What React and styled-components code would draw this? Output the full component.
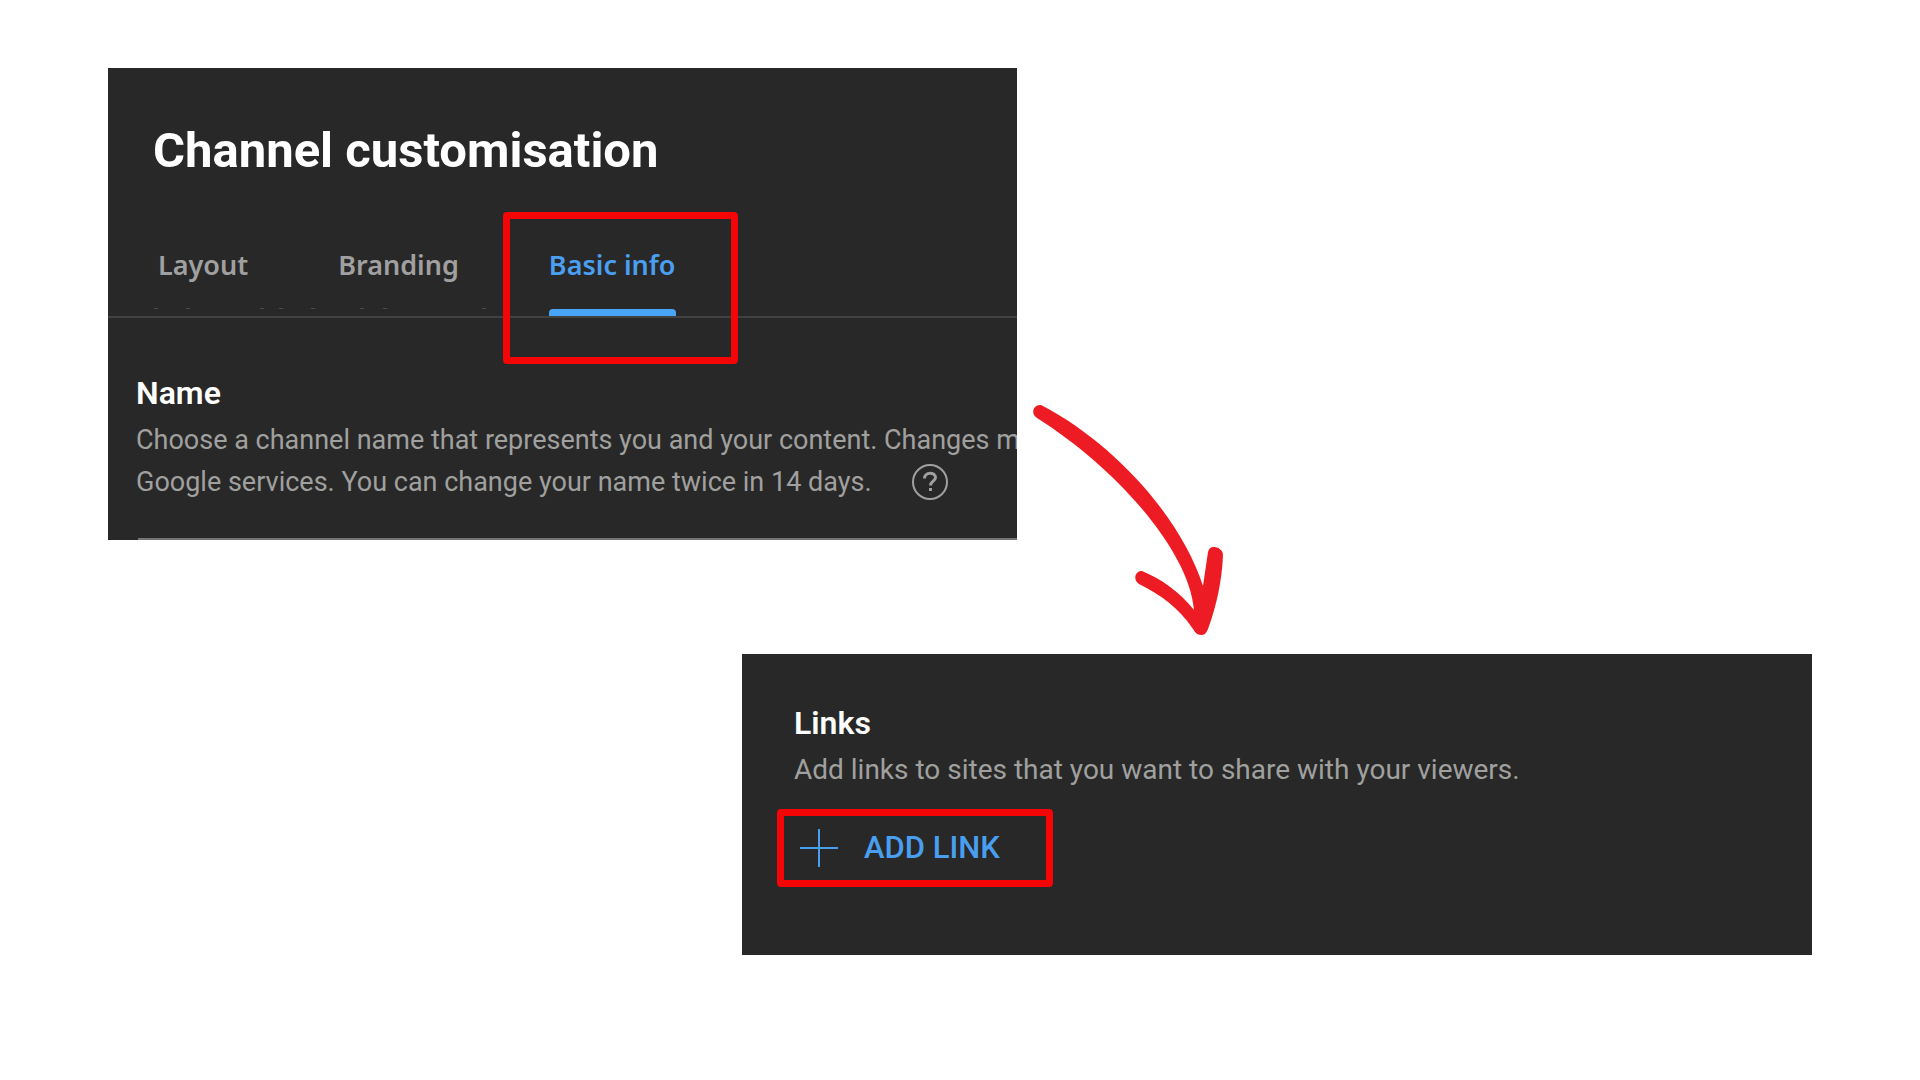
import React from "react";
import styled, { createGlobalStyle } from "styled-components";

const GlobalStyle = createGlobalStyle`
  *, *::before, *::after { box-sizing: border-box; }
  body { margin: 0; background: #fff; font-family: Roboto, "Liberation Sans", sans-serif; }
`;

const Page = styled.main`
  display: flex;
  flex-direction: column;
  gap: 14px;
  padding: 68px 108px;
`;

const TopRow = styled.div`
  display: flex;
  align-items: flex-start;
`;

const Panel = styled.section`
  width: 100%;
  max-width: ${(p) => p.$max};
  background: #282828;
  overflow: hidden;
`;

const CustomisationPanel = styled(Panel)`
  min-width: 0;
`;

const LinksPanel = styled(Panel)`
  margin-left: auto;
  padding: 48px 35px 68px;
`;

const Title = styled.h1`
  margin: 0;
  padding: 53px 45px 0;
  font: 700 49px/60px Roboto, "Liberation Sans", sans-serif;
  color: #fff;
`;

const Tabs = styled.nav`
  position: relative;
  display: flex;
  gap: 90px;
  height: 137px;
  padding: 64px 50px 0;
  border-bottom: 2px solid #414141;
`;

const Tab = styled.button`
  position: relative;
  padding: 0 0 31px;
  border: 0;
  background: none;
  font: 600 27px/40px "Noto Sans", "Open Sans", sans-serif;
  white-space: nowrap;
  color: ${(p) => (p.$active ? "#4a9ff0" : "#a0a0a0")};

  &::after {
    content: "";
    display: ${(p) => (p.$active ? "block" : "none")};
    position: absolute;
    inset: auto 0 0;
    height: 7px;
    border-radius: 4px 4px 0 0;
    background: #48a4f6;
  }
`;

const Highlight = styled.span`
  position: absolute;
  inset: -33px -62px -48px -46px;
  z-index: 1;
  border: 7px solid #f50505;
  border-radius: 4px;
  pointer-events: none;
`;

const Specks = styled.svg`
  position: absolute;
  left: 0;
  bottom: 6px;
`;

const Field = styled.div`
  padding: ${(p) => p.$pad};
`;

const Heading = styled.h2`
  margin: 0 0 5px;
  font: 600 32px/42px Roboto, sans-serif;
  color: #fff;
`;

const Description = styled.p`
  margin: 0;
  font-size: ${(p) => p.$size};
  line-height: 42px;
  white-space: nowrap;
  color: #a0a09f;
`;

const DescriptionRow = styled.div`
  display: flex;
  align-items: center;
  gap: 40px;
`;

const HelpButton = styled.button`
  display: flex;
  padding: 0;
  border: 0;
  background: none;
`;

const InputEdge = styled.div`
  height: 2px;
  margin-left: 30px;
  background: #747474;
`;

const Arrow = styled.svg`
  flex: none;
  margin: 332px 0 0 13px;
`;

const AddLink = styled.button`
  display: flex;
  align-items: center;
  gap: 26px;
  height: 78px;
  margin-top: 18px;
  padding: 0 46px 0 16px;
  border: 7px solid #f50505;
  border-radius: 4px;
  background: none;
  font: 500 31px/40px Roboto, sans-serif;
  white-space: nowrap;
  color: #489ff0;
`;

const tabs = ["Layout", "Branding", "Basic info"];
const specks = [46, 78, 152, 171, 203, 252, 275, 374];

export default function App() {
  return (
    <>
      <GlobalStyle />
      <Page>
        <TopRow>
          <CustomisationPanel $max="909px">
            <Title>Channel customisation</Title>
            <Tabs aria-label="Channel customisation">
              {tabs.map((name) => (
                <Tab key={name} type="button" $active={name === "Basic info"}>
                  {name}
                  {name === "Basic info" && <Highlight />}
                </Tab>
              ))}
              <Specks width="390" height="3" aria-hidden="true">
                {specks.map((x) => (
                  <rect key={x} x={x} y="1" width="4" height="1" fill="#484b4d" />
                ))}
              </Specks>
            </Tabs>
            <Field $pad="54px 28px 35px">
              <Heading>Name</Heading>
              <Description $size="27px">
                Choose a channel name that represents you and your content. Changes m
              </Description>
              <DescriptionRow>
                <Description $size="27px">
                  Google services. You can change your name twice in 14 days.
                </Description>
                <HelpButton type="button" aria-label="Help">
                  <svg width="36" height="36" fill="none" stroke="#a0a0a0">
                    <circle cx="18" cy="18" r="17" strokeWidth="2" />
                    <path d="M12.5 14.500c0-7 11-6.500 11-1 0 3.500-5 4-5 8" strokeWidth="3" />
                    <path d="M18.500 24v3" strokeWidth="3" />
                  </svg>
                </HelpButton>
              </DescriptionRow>
            </Field>
            <InputEdge />
          </CustomisationPanel>
          <Arrow width="200" height="240" viewBox="0 0 200 240" aria-hidden="true">
            <path
              fill="#ed1c24"
              d="M12 5.500C82 42 150 115 173 186L178 152C179 148 181 146.500 185 147C190 148 193 151 193 155C192 180 187 204 178 229C176 234 174 235 171 235C167 235 165 232 163 229C149 208 131 195 109 184C102 179 106 170 112 171C131 179 149 191 164 210C159 150 85 67 7 18C-1 13 5 3 12 5.500z"
            />
          </Arrow>
        </TopRow>
        <LinksPanel $max="1070px">
          <Field $pad="0 17px">
            <Heading>Links</Heading>
            <Description $size="28px">Add links to sites that you want to share with your viewers.</Description>
          </Field>
          <AddLink type="button">
            <svg width="38" height="38" stroke="#489ff0" strokeWidth="2" aria-hidden="true">
              <path d="M19 0v38M0 19h38" />
            </svg>
            ADD LINK
          </AddLink>
        </LinksPanel>
      </Page>
    </>
  );
}
